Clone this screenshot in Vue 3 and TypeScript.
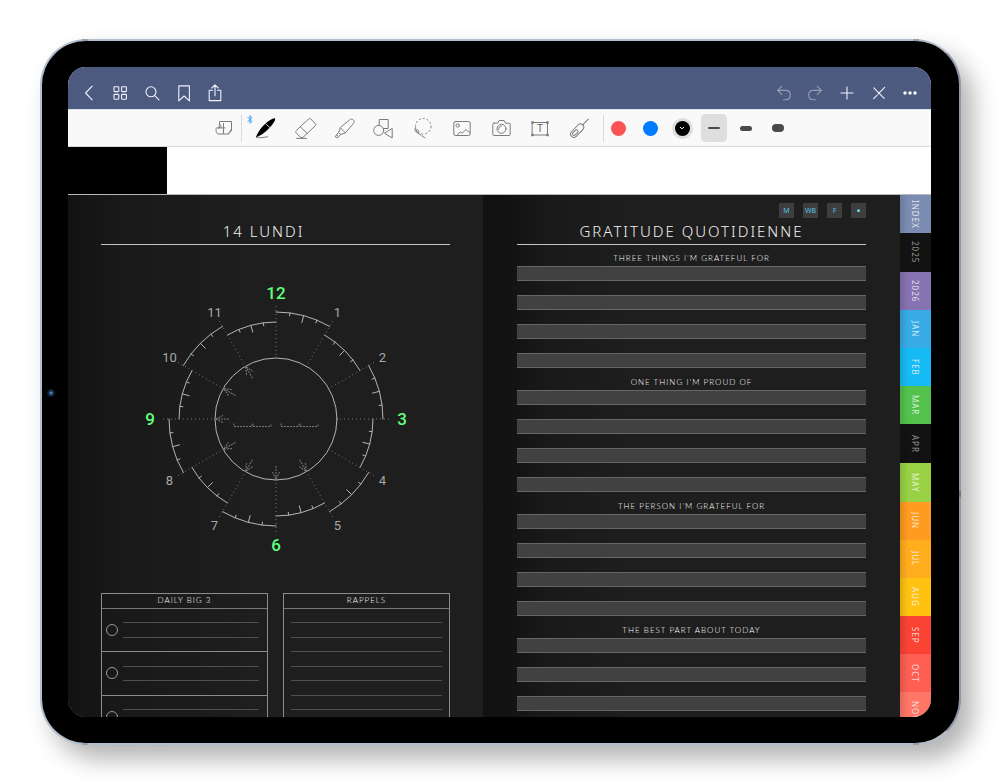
<script setup lang="ts">
import { ref } from 'vue'

interface Point { x: number; y: number }
interface Tab { label: string; color: string; tall?: boolean; dim?: boolean }

const tabs: Tab[] = [
  { label: 'INDEX', color: '#7b8cb2' },
  { label: '2025', color: '#121212', tall: true, dim: true },
  { label: '2026', color: '#8673b1' },
  { label: 'JAN', color: '#38aae6' },
  { label: 'FEB', color: '#16baf4' },
  { label: 'MAR', color: '#52c24c' },
  { label: 'APR', color: '#121212', tall: true, dim: true },
  { label: 'MAY', color: '#98d244', tall: true },
  { label: 'JUN', color: '#ff9b20' },
  { label: 'JUL', color: '#ffad1c' },
  { label: 'AUG', color: '#ffc211' },
  { label: 'SEP', color: '#fb4334' },
  { label: 'OCT', color: '#ff5f52' },
  { label: 'NOV', color: '#ff7667' },
]

const sections = [
  'THREE THINGS I’M GRATEFUL FOR',
  'ONE THING I’M PROUD OF',
  'THE PERSON I’M GRATEFUL FOR',
  'THE BEST PART ABOUT TODAY',
]

const shortcuts = ['M', 'WB', 'F', '•']
const done = ref<boolean[]>([false, false, false])

const polar = (radius: number, degrees: number): Point => {
  const a = (degrees * Math.PI) / 180
  return {
    x: Math.round(radius * Math.sin(a) * 100) / 100,
    y: Math.round(-radius * Math.cos(a) * 100) / 100,
  }
}
const segment = (a: Point, b: Point): string => `M${a.x} ${a.y}L${b.x} ${b.y}`

const hours = Array.from({ length: 12 }, (_, i) => {
  const start = i * 30
  const radius = i % 2 === 0 ? 107 : 97
  const from = polar(radius, start)
  const to = polar(radius, start + 30)
  const ticks = [7.5, 15, 22.5]
    .map((d) => segment(polar(radius, start + d), polar(radius - (d === 15 ? 7 : 3), start + d)))
    .join('')
  const major = i % 3 === 0
  return {
    label: i === 0 ? '12' : String(i),
    major,
    at: polar(major ? 126 : 123, start),
    arc: `M${from.x} ${from.y}A${radius} ${radius} 0 0 1 ${to.x} ${to.y}${ticks}`,
    spoke: segment(polar(64, start), polar(114, start)),
    arrow: i >= 5,
    angle: start,
  }
})
</script>

<template>
  <main class="stage">
    <div class="device">
      <span class="camera"></span>
      <span class="nub top left"></span>
      <span class="nub top right"></span>
      <span class="nub bottom left"></span>
      <span class="nub bottom right"></span>
      <span class="nub side"></span>
      <span class="key one"></span>
      <span class="key two"></span>
      <div class="screen">
        <header class="navbar">
          <nav class="group">
            <button aria-label="Back"><svg viewBox="0 0 24 24"><path d="M15.2 5.2 8.6 12l6.6 6.8" /></svg></button>
            <button aria-label="Thumbnails"><svg viewBox="0 0 24 24"><rect x="6" y="5.8" width="4.8" height="4.8" rx=".6" /><rect x="13.6" y="5.8" width="4.8" height="4.8" rx=".6" /><rect x="6" y="13.4" width="4.8" height="4.8" rx=".6" /><rect x="13.6" y="13.4" width="4.8" height="4.8" rx=".6" /></svg></button>
            <button aria-label="Search"><svg viewBox="0 0 24 24"><circle cx="11" cy="10.8" r="5" /><path d="m14.7 14.6 4.3 4.3" /></svg></button>
            <button aria-label="Bookmark"><svg viewBox="0 0 24 24"><path d="M6.8 4.9h10.6v15L12.1 15l-5.3 4.9z" /></svg></button>
            <button aria-label="Share"><svg viewBox="0 0 24 24"><path d="M9.6 9.2H6.2v10.4h11.6V9.2h-3.4M12 14.8V4M8.8 7 12 3.8 15.2 7" /></svg></button>
          </nav>
          <nav class="group">
            <button class="faded" aria-label="Undo"><svg viewBox="0 0 24 24"><path d="M9.7 5.4 5.6 9.4l4.1 4M5.8 9.4h8c6 0 6 9.3 0 9.3h-2.3" /></svg></button>
            <button class="faded" aria-label="Redo"><svg viewBox="0 0 24 24"><path d="m14.3 5.4 4.1 4-4.1 4M18.2 9.4h-8c-6 0-6 9.3 0 9.3h2.3" /></svg></button>
            <button aria-label="Add"><svg viewBox="0 0 24 24"><path d="M12 6v12M6 12h12" /></svg></button>
            <button aria-label="Close editing"><svg viewBox="0 0 24 24"><path d="m6.800 6.800 10.400 10.600M17.600 6.400 11 13.200M10 14.300l-3.400 3.300" /></svg></button>
            <button aria-label="More"><svg viewBox="0 0 24 24" class="solid"><circle cx="7" cy="12" r="1.7" /><circle cx="12" cy="12" r="1.7" /><circle cx="17" cy="12" r="1.7" /></svg></button>
          </nav>
        </header>

        <div class="toolbar" role="toolbar" aria-label="Drawing tools">
          <button class="mode" aria-label="Reading mode"><svg viewBox="0 0 24 24"><path d="M7.500 8.500V5.500h12v9.500l-3.200 3H7c-2 0-2.800-1.200-2.600-2.500-.8-.4-.8-1.500 0-1.900-.8-.5-.6-1.700.3-1.700h2.200M7.200 11.900V9.500c0-1.300 1.600-1.300 1.600 0v2.400M11.500 7.500v9.700M6.500 11.900h6.500M19.500 13.200l-3.200 4.600" /></svg></button>
          <i class="rule"></i>
          <div class="tools">
            <button aria-label="Pen">
              <svg class="bluetooth" viewBox="0 0 6 10"><path d="m.8 2.800 4 4L3 8.800V1.200l1.800 2-4 4" /></svg>
              <svg viewBox="0 0 24 24"><path d="M1.800 21.400C4 15.500 8.500 9.500 15 4.800c3-2.200 5.300-3 6-2.300.8.800-.4 3-2.600 5.900C14 14 8 19.300 1.800 21.400z" fill="#000" stroke="none" /><path d="m12 8.200 3.600 3.200" stroke="#f9f9f9" stroke-width=".8" /><path d="M2.500 21.300c3 .6 5.700.5 8.500-.2l2.700-.3" /></svg>
            </button>
            <button aria-label="Eraser"><svg viewBox="0 0 24 24"><path d="M15.600 3a1.600 1.600 0 0 1 2.200 0l4.500 4.700a1.400 1.400 0 0 1 0 2L10 21.400H7.600L3 16.600a1.300 1.300 0 0 1 0-1.800zM7.300 10.800l7 6.800M3.500 22.400h10" /></svg></button>
            <button aria-label="Highlighter"><svg viewBox="0 0 24 24"><path d="M17.800 3.700c2-2 5.900.9 3.900 3.500l-8.300 9.600-4.700 1.700-2.100-2 1.700-4.700zM8.300 11.800l5.100 5M6.600 16.500l-2 2.200 2.100 2 2-2.200M4.600 18.700 3.200 20.900l2.200.8 1.300-1" /></svg></button>
            <button aria-label="Shapes"><svg viewBox="0 0 24 24"><path d="M8.200 9.300V3.500h9v9h-4.700" /><circle cx="7.700" cy="14.400" r="5" /><path d="m13.800 17 7.400-4.600v9.200z" /></svg></button>
            <button aria-label="Lasso"><svg viewBox="0 0 24 24"><circle cx="13.200" cy="10.300" r="7.800" stroke-dasharray="2 2" stroke-linecap="butt" /><path d="M5.600 11.500c-1.200 2.400-.8 4 .8 4.500 2 .6 3-.8 1.800-1.800-1.800-1.200-2.400.6-1 2.300l3.700 2.800" /><path d="m12 19.800 3 2" stroke-dasharray="2 1" /></svg></button>
            <button aria-label="Image"><svg viewBox="0 0 24 24"><rect x="4.800" y="5.500" width="16.400" height="14" rx="1.500" /><circle cx="8.700" cy="9.500" r="1.700" /><path d="M8.300 19.300c1-2 2.300-3.300 3.400-3.200l1.400 1.100 4-3.700 1.800 2 .8-.2 1.300 1.500" /></svg></button>
            <button aria-label="Camera"><svg viewBox="0 0 24 24"><path d="M6 7.200h3.600l1.500-2.700h5l1.500 2.700H21c.8 0 1.200.5 1.200 1.200v9.900c0 .8-.5 1.200-1.200 1.200H6c-.8 0-1.200-.5-1.200-1.200V8.400c0-.7.400-1.200 1.200-1.200z" /><circle cx="13.500" cy="12.800" r="4.500" /><path d="M10.600 13.500c-.3-2 1.200-3.600 3-3.500" /></svg></button>
            <button aria-label="Text box"><svg viewBox="0 0 24 24"><rect x="5.500" y="6.500" width="15" height="12.500" /><g fill="#777" stroke="none"><rect x="4.300" y="5.300" width="2.400" height="2.400" /><rect x="19.300" y="5.300" width="2.400" height="2.400" /><rect x="4.300" y="17.800" width="2.400" height="2.400" /><rect x="19.300" y="17.800" width="2.400" height="2.400" /></g><text x="13" y="16.400" class="letter">T</text></svg></button>
            <button aria-label="Laser pointer"><svg viewBox="0 0 24 24"><g transform="rotate(-46 11.500 14.300)"><rect x="3" y="11" width="16" height="6.600" rx="3.300" /><rect x="5" y="12.700" width="6.500" height="3.200" rx="1.600" /><path d="M19 14.300h8" /></g></svg></button>
          </div>
          <i class="rule"></i>
          <div class="presets">
            <button aria-label="Red"><i class="dot red"></i></button>
            <button aria-label="Blue"><i class="dot blue"></i></button>
            <button aria-label="Black" aria-pressed="true"><i class="dot black"><svg viewBox="0 0 6 6"><path d="m1.200 2.200 1.800 1.600 1.800-1.600" /></svg></i></button>
            <button class="picked" aria-label="Thin stroke" aria-pressed="true"><i class="line thin"></i></button>
            <button aria-label="Medium stroke"><i class="line medium"></i></button>
            <button aria-label="Thick stroke"><i class="line thick"></i></button>
          </div>
        </div>

        <div class="docbar"><span></span></div>

        <div class="planner">
          <section class="page day">
            <h1 class="title">14 LUNDI</h1>
            <svg class="clock" viewBox="-140 -140 280 280">
              <circle r="61" class="ink" />
              <g v-for="h in hours" :key="h.label">
                <path :d="h.arc" class="ink" />
                <path :d="h.spoke" class="dots" />
                <g v-if="h.arrow" :transform="`rotate(${h.angle})`">
                  <path d="M0 -47V-61" class="tail" />
                  <path d="M-3.500 -53 0 -60.500 3.500 -53" class="head" />
                </g>
                <text :x="h.at.x" :y="h.at.y" :class="['hour', { major: h.major }]">{{ h.label }}</text>
              </g>
              <path class="slots" d="M-42 4.500V7.500H-24V4.500M-23 4.500V7.500H-5V4.500M5 4.500V7.500H23V4.500M24 4.500V7.500H42V4.500" />
            </svg>
            <div class="cards">
              <section class="card">
                <h2>DAILY BIG 3</h2>
                <ul class="goals">
                  <li v-for="(_, i) in done" :key="i">
                    <input v-model="done[i]" type="checkbox" :aria-label="`Goal ${i + 1}`" />
                    <div><span></span><span></span></div>
                  </li>
                </ul>
              </section>
              <section class="card">
                <h2>RAPPELS</h2>
                <ul class="notes"><li v-for="n in 8" :key="n"></li></ul>
              </section>
            </div>
          </section>

          <section class="page thanks">
            <nav class="shortcuts"><a v-for="s in shortcuts" :key="s" href="#">{{ s }}</a></nav>
            <h1 class="title">GRATITUDE QUOTIDIENNE</h1>
            <div class="sections">
              <section v-for="s in sections" :key="s">
                <h2>{{ s }}</h2>
                <div class="bars"><input v-for="n in 4" :key="n" type="text" :aria-label="`${s} ${n}`" /></div>
              </section>
            </div>
          </section>

          <nav class="tabs">
            <a v-for="t in tabs" :key="t.label" href="#" :class="{ tall: t.tall, dim: t.dim }" :style="{ backgroundColor: t.color }">{{ t.label }}</a>
          </nav>
        </div>
      </div>
    </div>
  </main>
</template>

<style>
body { margin: 0; background: #fff; }
</style>

<style scoped>
* { box-sizing: border-box; }
.stage {
  height: 100vh;
  min-height: 480px;
  padding: 39px 39px 38px 40px;
  overflow: hidden;
  font-family: "Noto Sans", "Open Sans", sans-serif;
}
.device {
  position: relative;
  height: 100%;
  padding: 26px 28px 26px 26px;
  border: 2px solid #b4bfce;
  border-right-color: #8e97a8;
  border-radius: 46px;
  background: #000;
  box-shadow: 12px 14px 24px rgba(0, 0, 0, .3);
}
.camera {
  position: absolute;
  left: 5px;
  top: 50%;
  width: 8px;
  height: 8px;
  margin-top: -3px;
  border-radius: 50%;
  background: radial-gradient(circle, #4a7bb0 0 1px, #16304f 2px, #0b1726 4px);
}
.nub { position: absolute; width: 6px; height: 2px; background: #9a9fa6; }
.nub.top { top: -2px; }
.nub.bottom { bottom: -2px; }
.nub.left { left: 40px; }
.nub.right { right: 40px; }
.nub.side { right: -2px; top: 450px; width: 2px; height: 6px; background: #6f7786; }
.key { position: absolute; bottom: -3px; width: 30px; height: 1px; background: #b0b8c4; }
.key.one { left: 64px; }
.key.two { left: 103px; }
.screen {
  display: flex;
  flex-direction: column;
  height: 100%;
  overflow: hidden;
  border-radius: 18px;
  background: #fff;
}
button {
  display: flex;
  align-items: center;
  justify-content: center;
  padding: 0;
  border: 0;
  background: none;
  cursor: pointer;
}
svg { fill: none; stroke-linecap: round; stroke-linejoin: round; }

.navbar {
  display: flex;
  flex: none;
  justify-content: space-between;
  height: 42px;
  padding: 10px 5px 0 5px;
  background: #4d5a80;
}
.group { display: grid; grid-template-columns: repeat(5, 1fr); width: 158px; }
.group svg { width: 24px; height: 24px; stroke: #f0f2f7; stroke-width: 1.1; }
.group .faded { opacity: .45; }
.group .solid { fill: #fff; stroke: none; }

.toolbar {
  display: flex;
  flex: none;
  align-items: center;
  justify-content: center;
  height: 38px;
  border-top: 1px solid #dfe2ec;
  border-bottom: 1px solid #d8d8d8;
  background: #f9f9f9;
}
.toolbar svg { width: 24px; height: 24px; stroke: #7c7c7c; stroke-width: 1; }
.mode { width: 34px; }
.rule { width: 1px; height: 27px; background: #dadada; }
.tools { display: flex; margin: 0 6px 0 4px; }
.tools button { position: relative; width: 39px; height: 28px; }
.toolbar .bluetooth {
  position: absolute;
  left: 1px;
  top: 0;
  width: 6px;
  height: 11px;
  stroke: #2e95f5;
  stroke-width: .9;
}
.letter { fill: #666; stroke: none; font: 11px "Open Sans", sans-serif; text-anchor: middle; }
.presets { display: flex; gap: 4px; }
.presets button { width: 28px; height: 28px; border-radius: 5px; }
.presets .picked { background: #dedede; background-clip: padding-box; border: solid transparent; border-width: 0 1px; }
.dot { display: flex; align-items: center; justify-content: center; width: 15px; height: 15px; border-radius: 50%; }
.red { background: #fb5354; }
.blue { background: #007aff; }
.black { background: #000; box-shadow: 0 0 0 3px #dfdfdf; }
.toolbar .black svg { width: 6px; height: 6px; stroke: #fff; }
.line { width: 12px; border-radius: 4px; background: #4a4a4a; }
.thin { height: 2px; }
.medium { height: 5px; }
.thick { height: 8px; }

.docbar { display: flex; flex: none; height: 48px; border-bottom: 1px solid #b8b8b8; }
.docbar span { width: 99px; background: #000; }

.planner { display: flex; flex: 1; min-height: 0; overflow: hidden; background: #1e1e1e; }
.page { flex: 1 1 0; min-width: 0; }
.day { padding: 0 33px; background: linear-gradient(90deg, #121212, #191919 50px, #1e1e1e 180px); }
.thanks { padding: 0 34px; background: linear-gradient(90deg, #111, #121212 24px, #191919 60px, #1e1e1e 150px); }
.title {
  margin: 0;
  padding: 0 0 2px;
  color: #f2f2f2;
  font-size: 15px;
  font-weight: 300;
  line-height: 22px;
  letter-spacing: 2px;
  text-align: center;
  border-bottom: 1px solid #c4c4c4;
}
.day .title { padding: 25px 24px 2px 0; }
.clock { display: block; width: 280px; height: 280px; margin: 34px auto; }
.ink { stroke: #b5b5b5; stroke-width: 1; }
.dots { stroke: #777; stroke-width: 1; stroke-dasharray: 1 3; stroke-linecap: butt; }
.tail { stroke: #777; stroke-dasharray: 2 1; stroke-linecap: butt; }
.head { stroke: #808080; stroke-dasharray: 2 1; stroke-linecap: butt; }
.slots { stroke: #777; stroke-dasharray: 2 1; stroke-linecap: butt; }
.hour {
  fill: #a8a8a8;
  font-family: Roboto, "Liberation Sans", sans-serif;
  font-size: 13px;
  text-anchor: middle;
  dominant-baseline: central;
}
.hour.major { fill: #62ff7c; font-size: 17px; font-weight: 500; }
.cards { display: grid; grid-template-columns: 1fr 1fr; gap: 15px; }
.card { height: 190px; border: 1px solid #8c8c8c; }
.card h2, .sections h2 {
  margin: 0;
  color: #fff;
  font-family: Lato, "Noto Sans", sans-serif;
  font-size: 8px;
  font-weight: 300;
  letter-spacing: 1px;
  text-align: center;
}
.card h2 { line-height: 12px; height: 15px; border-bottom: 1px solid #777; }
ul { margin: 0; padding: 0; list-style: none; }
.goals li { display: flex; gap: 5px; height: 43px; padding: 0 8px 0 4px; border-bottom: 1px solid #8c8c8c; }
.goals li:nth-child(even) { height: 44px; }
.goals input {
  flex: none;
  appearance: none;
  width: 12px;
  height: 12px;
  margin: 15px 0 0;
  border: 1px solid #9a9a9a;
  border-radius: 50%;
}
.goals input:checked { background: #62ff7c; }
.goals div { flex: 1; }
.goals span { display: block; height: 14px; border-bottom: 1px solid #505050; }
.goals span + span { height: 15px; }
.goals li:nth-child(even) span { height: 15px; }
.goals li:nth-child(even) span + span { height: 14px; }
.notes { padding: 0 7px; }
.notes li { height: 14px; border-bottom: 1px solid #505050; }
.notes li:nth-child(even) { height: 15px; }

.shortcuts { display: flex; justify-content: flex-end; gap: 9px; padding: 8px 0 2px; }
.shortcuts a {
  width: 15px;
  color: #55c0ea;
  font-size: 7px;
  line-height: 15px;
  text-align: center;
  text-decoration: none;
  background: #3e3e3e;
}
.shortcuts a:last-child { color: #6ce5ff; font-size: 11px; }
.sections { display: grid; gap: 1px; }
.sections h2 { padding-top: 5px; line-height: 16px; }
.bars { display: grid; gap: 14px; }
.bars input {
  width: 100%;
  min-width: 0;
  height: 15px;
  padding: 0 4px;
  color: #eee;
  font: inherit;
  font-size: 9px;
  border: solid #666;
  border-width: 1px 0;
  border-radius: 0;
  background: #414141;
}

.tabs { display: flex; flex: none; flex-direction: column; width: 31px; }
.tabs a {
  flex: none;
  height: 38px;
  color: rgba(255, 255, 255, .78);
  font-size: 8px;
  line-height: 31px;
  letter-spacing: 1px;
  text-align: center;
  text-decoration: none;
  writing-mode: vertical-rl;
  background-image: linear-gradient(90deg, rgba(0, 0, 0, .12), transparent 8px);
}
.tabs .tall { height: 39px; }
.tabs .dim { color: rgba(255, 255, 255, .55); }
</style>
